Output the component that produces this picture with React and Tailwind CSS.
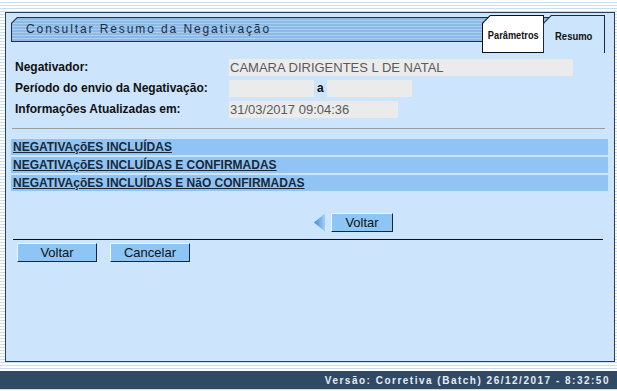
const btn =
  "h-[19px] border border-t-[#f0f8ff] border-l-[#f0f8ff] border-b-[#14264a] border-r-[#14264a] bg-[#8dc5f5] text-center text-[13px] leading-[17px] text-[#111]";

const links = [
  "NEGATIVAçõES INCLUÍDAS",
  "NEGATIVAçõES INCLUÍDAS E CONFIRMADAS",
  "NEGATIVAçõES INCLUÍDAS E NãO CONFIRMADAS",
];

function Field({ className = "", children }) {
  return (
    <div className={`h-[17px] bg-[#ebebeb] pl-px text-[13px] leading-[17px] text-[#5a5a5a] ${className}`}>
      {children}
    </div>
  );
}

function Label({ children }) {
  return <div className="w-[214px] self-start text-[12px] font-bold leading-[16px] text-[#111]">{children}</div>;
}

export default function App() {
  return (
    <div className="h-[391px] w-[617px] overflow-hidden bg-[repeating-linear-gradient(to_bottom,#ffffff_0px,#ffffff_2px,#c9ddef_2px,#c9ddef_3px)] pt-[12px] font-['Liberation_Sans',Arial,sans-serif]">
      <div className="ml-[5px] h-[350px] w-[610px] border border-[#2a3e55] bg-[#cce4fc]">
        {/* header: title bar + tabs */}
        <div className="flex items-start pl-[5px] pr-[9px] pt-[2px]">
          <div className="-mr-[123px] mt-[2px] h-[25px] flex-1 bg-[#1c3047] p-px [clip-path:polygon(6px_0,100%_0,100%_100%,0_100%,0_6px)]">
            <div className="h-full bg-[repeating-linear-gradient(to_bottom,#8cb9e5_0px,#8cb9e5_2px,#a9cff1_2px,#a9cff1_3px)] pl-[14px] text-[12px] leading-[22px] tracking-[1.9px] text-[#1f2f3f] [clip-path:polygon(5.5px_0,100%_0,100%_100%,0_100%,0_5.5px)]">
              Consultar Resumo da Negativação
            </div>
          </div>
          <div className="relative h-[38px] w-[62px] bg-[#111] p-px [clip-path:polygon(8px_0,100%_0,100%_100%,0_100%,0_8px)]">
            <div className="h-full bg-white pt-[13px] text-center text-[11px] font-bold leading-[13px] text-[#111] [clip-path:polygon(7.5px_0,100%_0,100%_100%,0_100%,0_7.5px)]">
              <span className="inline-block scale-x-[0.84]">Parâmetros</span>
            </div>
          </div>
          <div className="relative -ml-px h-[38px] w-[62px] bg-[#1c2a3a] px-px pt-px [clip-path:polygon(8px_0,100%_0,100%_100%,0_100%,0_8px)]">
            <div className="h-full bg-[#cce4fc] pt-[14px] text-center text-[11px] font-bold leading-[13px] text-[#111] [clip-path:polygon(7.5px_0,100%_0,100%_100%,0_100%,0_7.5px)]">
              <span className="inline-block scale-x-[0.86]">Resumo</span>
            </div>
          </div>
        </div>

        {/* dados */}
        <div className="mt-[6px] flex flex-col gap-[4px] pl-[9px]">
          <div className="flex h-[17px]">
            <Label>Negativador:</Label>
            <Field className="w-[344px]">CAMARA DIRIGENTES L DE NATAL</Field>
          </div>
          <div className="flex h-[17px]">
            <Label>Período do envio da Negativação:</Label>
            <Field className="w-[85px]" />
            <span className="mx-[3px] text-[12px] font-bold leading-[16px] text-[#111]">a</span>
            <Field className="w-[85px]" />
          </div>
          <div className="flex h-[17px]">
            <Label>Informações Atualizadas em:</Label>
            <Field className="w-[169px]">31/03/2017 09:04:36</Field>
          </div>
        </div>

        <div className="ml-[6px] mr-[9px] mt-[10px] h-px bg-[#9c9c9c]" />

        <div className="ml-[5px] mr-[6px] mt-[10px] flex flex-col gap-[2px]">
          {links.map((l) => (
            <div key={l} className="h-[16px] bg-[#8fc4f4] pl-[2px] text-[12px] font-bold leading-[17px] text-[#1a2838] underline">
              {l}
            </div>
          ))}
        </div>

        <div className="ml-[308px] mt-[22px] flex items-center gap-[6px]">
          <div className="h-[18px] w-[11px] bg-[linear-gradient(to_right,#3f88d6,#a3d0f7)] [clip-path:polygon(100%_0,100%_100%,0_50%)]" />
          <button type="button" className={`${btn} w-[62px]`}>Voltar</button>
        </div>

        <div className="ml-[7px] mr-[11px] mt-[7px] h-px bg-[#111]" />

        <div className="ml-[11px] mt-[3px] flex gap-[13px]">
          <button type="button" className={`${btn} w-[80px]`}>Voltar</button>
          <button type="button" className={`${btn} w-[80px]`}>Cancelar</button>
        </div>
      </div>

      <div className="mt-[9px] flex h-[18px] items-center justify-end bg-[#2f4a62] pr-[7px] text-[10px] font-bold tracking-[1.5px] text-[#e4edf5]">
        Versão: Corretiva (Batch) 26/12/2017 - 8:32:50
      </div>
    </div>
  );
}
